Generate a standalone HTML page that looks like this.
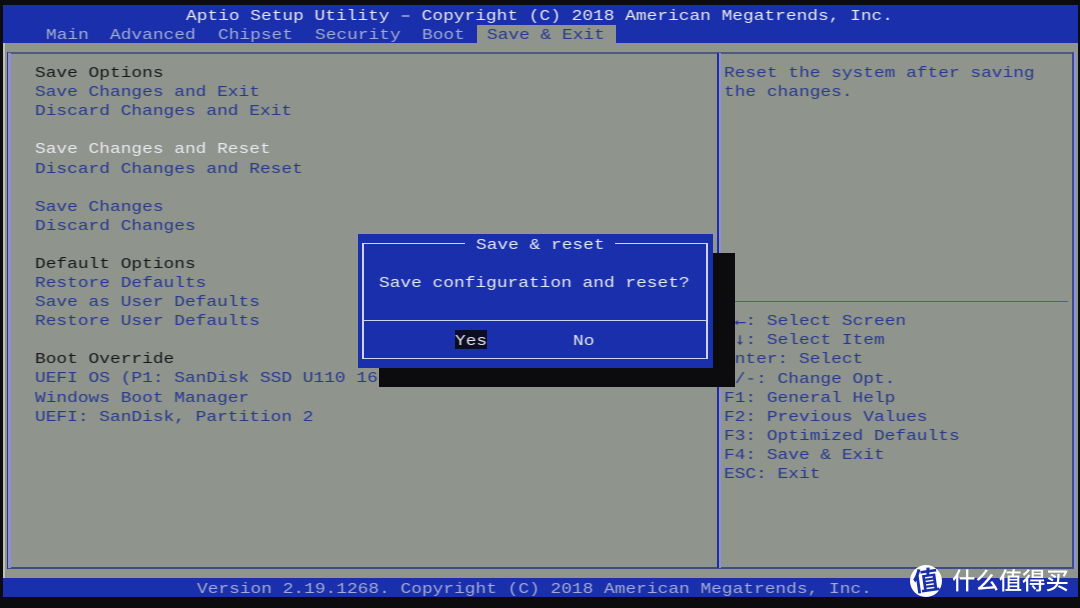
<!DOCTYPE html>
<html><head><meta charset="utf-8"><style>
html,body{margin:0;padding:0;background:#0c0c0e;width:1080px;height:608px;overflow:hidden}
#p{position:relative;width:1080px;height:608px;overflow:hidden;background:#0c0c0e}
.b{position:absolute}
.t{position:absolute;margin-top:2px;white-space:pre;font-family:"Liberation Mono","DejaVu Sans Mono",monospace;font-size:15px;line-height:18px;height:18px;transform-origin:0 50%;transform:scaleX(1.19);color:#27388f;filter:blur(.35px)}
.t b{-webkit-text-stroke:.5px currentColor}
.k{color:#15181a}.w{color:#e8eaf2}.l{color:#a3acd6}
</style></head><body><div id="p">
<div class="b" style="left:3px;top:5px;width:1075px;height:592px;background:#8f948c"></div>
<div class="b" style="left:3px;top:5px;width:1075px;height:38px;background:#1a2fab"></div>
<div class="b" style="left:3px;top:578px;width:1075px;height:19px;background:#1a2fab"></div>
<div class="b" style="left:477px;top:25px;width:139px;height:18px;background:#8f948c"></div>
<div class="b" style="left:3px;top:43px;width:2px;height:535px;background:#bfc2bb"></div>
<div class="b" style="left:7px;top:52px;width:1067px;height:2px;background:#4f5a80"></div>
<div class="b" style="left:7px;top:567px;width:1067px;height:2px;background:#3f4c86"></div>
<div class="b" style="left:7px;top:52px;width:1px;height:517px;background:#2a3878"></div>
<div class="b" style="left:8px;top:53px;width:3px;height:515px;background:#8b90d8"></div>
<div class="b" style="left:717px;top:53px;width:2px;height:515px;background:#1f2f98"></div>
<div class="b" style="left:719px;top:53px;width:2px;height:515px;background:#8b90d8"></div>
<div class="b" style="left:1072px;top:52px;width:2px;height:517px;background:#3f4c86"></div>
<div class="b" style="left:1074px;top:52px;width:2px;height:517px;background:#8b90d8"></div>
<div class="b" style="left:721px;top:301px;width:347px;height:1px;background:#4a5ab0"></div>

<div class="t w" style="left:186px;top:6px">Aptio Setup Utility – Copyright (C) 2018 American Megatrends, Inc.</div>
<div class="t l" style="left:46px;top:25px">Main</div>
<div class="t l" style="left:110px;top:25px">Advanced</div>
<div class="t l" style="left:218px;top:25px">Chipset</div>
<div class="t l" style="left:315px;top:25px">Security</div>
<div class="t l" style="left:422px;top:25px">Boot</div>
<div class="t" style="left:487px;top:25px">Save &amp; Exit</div>

<div class="t k" style="left:35px;top:63px">Save Options</div>
<div class="t" style="left:35px;top:82px">Save Changes and Exit</div>
<div class="t" style="left:35px;top:101px">Discard Changes and Exit</div>
<div class="t w" style="left:35px;top:139px">Save Changes and Reset</div>
<div class="t" style="left:35px;top:159px">Discard Changes and Reset</div>
<div class="t" style="left:35px;top:197px">Save Changes</div>
<div class="t" style="left:35px;top:216px">Discard Changes</div>
<div class="t k" style="left:35px;top:254px">Default Options</div>
<div class="t" style="left:35px;top:273px">Restore Defaults</div>
<div class="t" style="left:35px;top:292px">Save as User Defaults</div>
<div class="t" style="left:35px;top:311px">Restore User Defaults</div>
<div class="t k" style="left:35px;top:349px">Boot Override</div>
<div class="t" style="left:35px;top:368px">UEFI OS (P1: SanDisk SSD U110 16</div>
<div class="t" style="left:35px;top:388px">Windows Boot Manager</div>
<div class="t" style="left:35px;top:407px">UEFI: SanDisk, Partition 2</div>

<div class="t" style="left:724px;top:63px">Reset the system after saving</div>
<div class="t" style="left:724px;top:82px">the changes.</div>
<div class="t" style="left:724px;top:311px">→<b>←</b>: Select Screen</div>
<div class="t" style="left:724px;top:330px">↑<b>↓</b>: Select Item</div>
<div class="t" style="left:724px;top:349px">Enter: Select</div>
<div class="t" style="left:724px;top:369px">+/-: Change Opt.</div>
<div class="t" style="left:724px;top:388px">F1: General Help</div>
<div class="t" style="left:724px;top:407px">F2: Previous Values</div>
<div class="t" style="left:724px;top:426px">F3: Optimized Defaults</div>
<div class="t" style="left:724px;top:445px">F4: Save &amp; Exit</div>
<div class="t" style="left:724px;top:464px">ESC: Exit</div>

<div class="t l" style="left:197px;top:579px">Version 2.19.1268. Copyright (C) 2018 American Megatrends, Inc.</div>

<div class="b" style="left:379px;top:253px;width:356px;height:134px;background:#0c0c0e"></div>
<div class="b" style="left:358px;top:234px;width:355px;height:134px;background:#1a2fab"></div>
<div class="b" style="left:362px;top:243px;width:346px;height:116px;border:2px solid #cfd3ee;box-sizing:border-box;border-top-width:1px;border-bottom-width:1px"></div>
<div class="b" style="left:364px;top:320px;width:342px;height:1px;background:#cfd3ee"></div>
<div class="b" style="left:465px;top:240px;width:150px;height:8px;background:#1a2fab"></div>
<div class="b" style="left:455px;top:330px;width:32px;height:19px;background:#0c0c24"></div>
<div class="t w" style="left:476px;top:235px">Save &amp; reset</div>
<div class="t w" style="left:379px;top:273px">Save configuration and reset?</div>
<div class="t w" style="left:455px;top:331px">Yes</div>
<div class="t w" style="left:573px;top:331px">No</div>

<div class="b" style="left:910px;top:565px;width:32px;height:32px;border-radius:50%;background:#fff"></div>
<div class="b" style="left:911px;top:566px;width:30px;height:30px;text-align:center;font:bold 26px/30px 'Liberation Sans','Noto Sans CJK SC',sans-serif;color:#1a2fab;transform:rotate(-8deg)">值</div>
<div class="b" style="left:952px;top:566px;white-space:pre;font:500 23.4px/30px 'Liberation Sans','Noto Sans CJK SC',sans-serif;color:#fff">什么值得买</div>
</div></body></html>
